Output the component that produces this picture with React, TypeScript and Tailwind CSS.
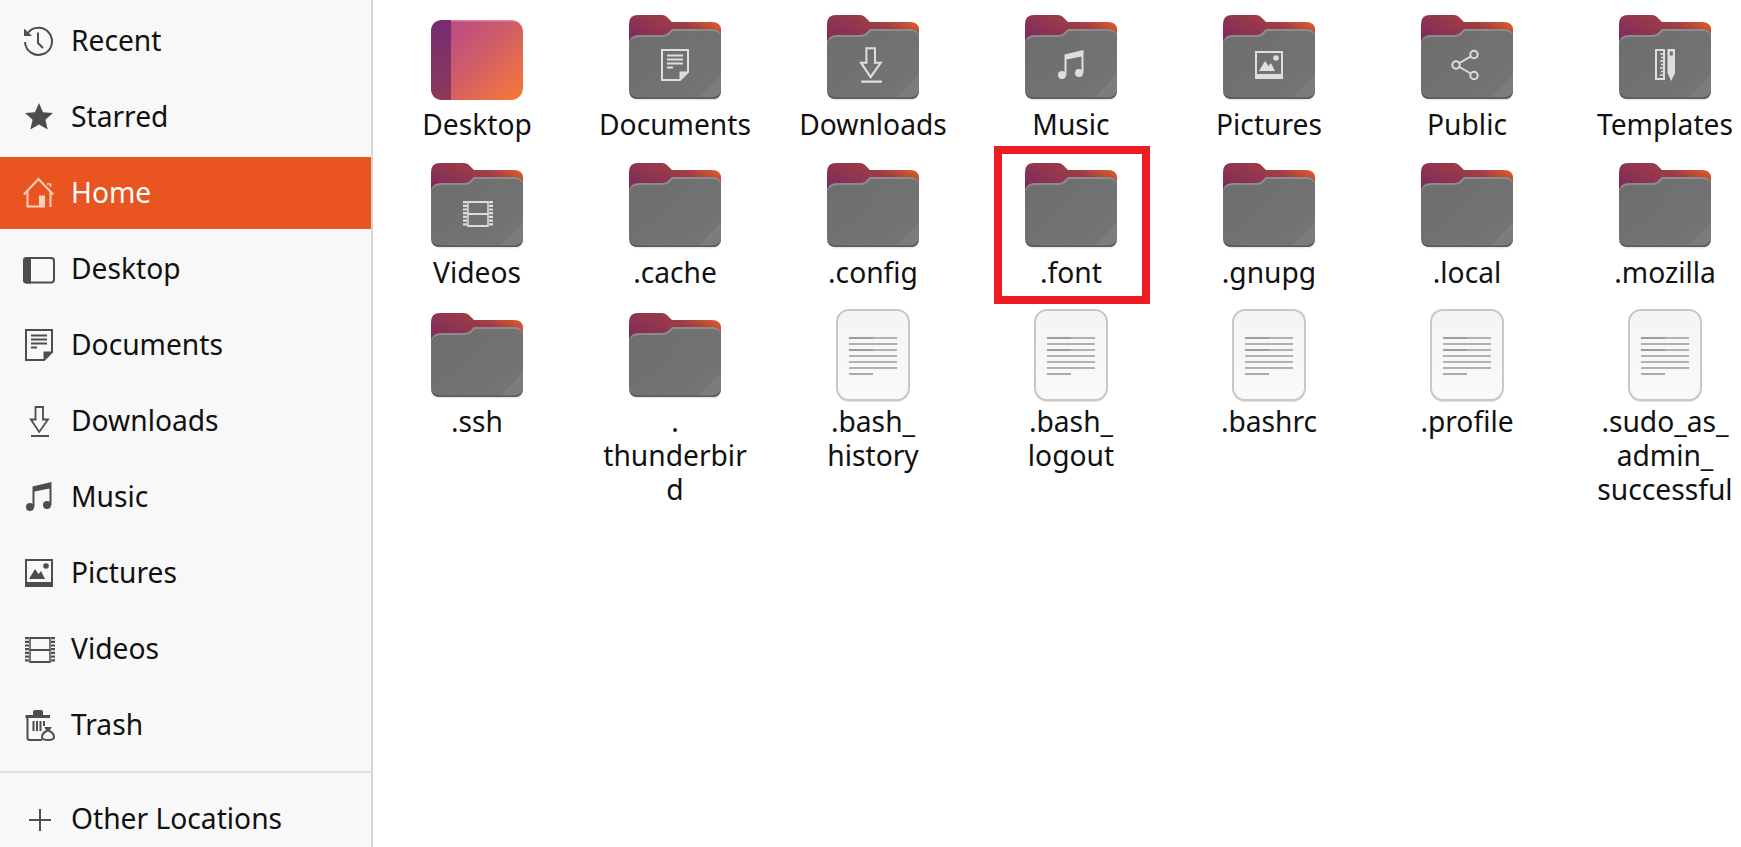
import React from "react";

type GlyphName =
  | "recent" | "starred" | "home" | "desktop" | "documents" | "downloads"
  | "music" | "pictures" | "videos" | "trash" | "plus" | "public" | "templates";

// all glyphs live in a 32x32 box, same drawing for sidebar and folder emblem
function GlyphPaths({ name }: { name: GlyphName }) {
  switch (name) {
    case "recent":
      return (
        <g fill="none" stroke="currentColor" strokeWidth="2">
          <path d="M4.5 8.5A13.5 13.5 0 1 1 2 17" />
          <path d="M1 3.5 L9 11 H1 Z" fill="currentColor" stroke="none" />
          <path d="M15 7.5V18L20 23" />
        </g>
      );
    case "starred":
      return <path fill="currentColor" d="M16 2l4 9.2 10 .9-7.6 6.6 2.3 9.8L16 23.4 7.3 28.5l2.3-9.8L2 12.1l10-.9z" />;
    case "home":
      return (
        <g fill="none" stroke="currentColor" strokeWidth="2">
          <path d="M0.8 17.5L15.5 2 30.2 17.5" />
          <path d="M4.5 14V29.5H16M27.5 14V30" />
          <path d="M24 7h3.5v3" strokeWidth="1.5" />
          <path d="M16 18.5h6V30.5h-6z" fill="currentColor" stroke="none" />
        </g>
      );
    case "desktop":
      return (
        <g>
          <rect x="1" y="5" width="30" height="24.5" rx="3" fill="none" stroke="currentColor" strokeWidth="2" />
          <path d="M3.5 4H8V30.5H3.5A3.5 3.5 0 0 1 0 27V7.5A3.5 3.5 0 0 1 3.5 4Z" fill="currentColor" />
        </g>
      );
    case "documents":
      return (
        <g>
          <path d="M3 1H29V23L21 31H3Z" fill="none" stroke="currentColor" strokeWidth="2" />
          <path d="M29 22.5H20.5V31Z" fill="currentColor" />
          <path d="M8 6.5H24M8 10.5H24M8 14.5H24M8 18.5H14" stroke="currentColor" strokeWidth="2" fill="none" />
        </g>
      );
    case "downloads":
      return (
        <g fill="none" stroke="currentColor" strokeWidth="1.8">
          <path d="M12.5 2H20V14.5H25L16.2 27 7.8 14.5H12.5Z" />
          <path d="M8 31H26" strokeWidth="2" />
        </g>
      );
    case "music":
      return (
        <g fill="currentColor">
          <circle cx="7" cy="26" r="4" />
          <circle cx="24" cy="24" r="4" />
          <path d="M9.5 5.5L28.5 1V24H26.5V7.5L11.5 10.5V26H9.5Z" />
        </g>
      );
    case "pictures":
      return (
        <g>
          <path fillRule="evenodd" fill="currentColor" d="M2 2H30V30H2ZM4 4V25H28V4Z" />
          <path fill="currentColor" d="M6 22L12 12 15.5 17 18 14 22 22Z" />
          <circle cx="23" cy="9" r="2.8" fill="currentColor" />
        </g>
      );
    case "videos":
      return (
        <g fill="none" stroke="currentColor">
          <path d="M4 4V30M30 4V30" strokeWidth="4" strokeDasharray="2.2 1.5" />
          <path d="M7 5H27M7 17H27M7 29H27" strokeWidth="2" />
          <path d="M7 4V30M27 4V30" strokeWidth="1.5" />
        </g>
      );
    case "trash":
      return (
        <g fill="none" stroke="currentColor">
          <path d="M10 6.5V3Q10 1 12 1H18Q20 1 20 3V6.5Z" fill="currentColor" stroke="none" />
          <path d="M2.5 7.5H27" strokeWidth="3" />
          <path d="M4.5 9V29Q4.5 31 6.5 31H19" strokeWidth="2" />
          <path d="M10.5 12V22M14 12V22M17.5 12V22M21 12V17" strokeWidth="2" />
          <path d="M23 19L27 19 25.5 21.5Q31 24 31 28 31 31 25 31 19 31 19 28 19 24 24.5 21.5Z" strokeWidth="2" />
        </g>
      );
    case "plus":
      return <path d="M17 6V28M6 17H28" fill="none" stroke="currentColor" strokeWidth="2" />;
    case "public":
      return (
        <g fill="none" stroke="currentColor" strokeWidth="2">
          <circle cx="5" cy="16" r="3.7" />
          <circle cx="23" cy="5.5" r="3.7" />
          <circle cx="23" cy="26.5" r="3.7" />
          <path d="M8.3 14L19.8 7.5M8.3 18L19.8 24.5" />
        </g>
      );
    case "templates":
      return (
        <g>
          <path fillRule="evenodd" fill="currentColor" d="M6 0H16V31H6ZM8 2V29H14V2Z" />
          <path stroke="currentColor" strokeWidth="1.3" d="M11 5H14M12 8.5H14M11 12H14M12 15.5H14M11 19H14M12 22.5H14M11 26H14" />
          <path fillRule="evenodd" fill="currentColor" d="M18.5 0H26V24L22.2 32 18.5 24ZM20.8 2.5V6.5H23.8V2.5Z" />
        </g>
      );
  }
}

function Glyph({ name, className }: { name: GlyphName; className?: string }) {
  return (
    <svg viewBox="0 0 32 32" width="32" height="32" className={className} overflow="visible">
      <GlyphPaths name={name} />
    </svg>
  );
}

function FolderIcon({ emblem }: { emblem?: GlyphName }) {
  return (
    <svg viewBox="0 0 92 86" width="92" height="86" className="block shrink-0">
      <defs>
        <linearGradient id="folderBack" x1="0" y1="0.9" x2="1" y2="0.1">
          <stop offset="0" stopColor="#752560" />
          <stop offset="0.35" stopColor="#8a3155" />
          <stop offset="0.7" stopColor="#a03d44" />
          <stop offset="1" stopColor="#ee6424" />
        </linearGradient>
        <linearGradient id="folderFace" x1="0" y1="0" x2="1" y2="1">
          <stop offset="0" stopColor="#6d6d6d" />
          <stop offset="1" stopColor="#757575" />
        </linearGradient>
      </defs>
      <path d="M0 22Q0 85.5 8 85.5H84Q92 85.5 92 77V22Z" fill="#000" opacity="0.08" />
      <path d="M9 0H33Q36 0 38 2L43 7H83Q92 7 92 15V40H0V9Q0 0 9 0Z" fill="url(#folderBack)" />
      <path d="M0 30Q0 20 10 20H34Q37 20 39 18L43 14H83Q92 14 92 23V75Q92 84 83 84H9Q0 84 0 75Z" fill="url(#folderFace)" />
      <path d="M14 84L62 14H72L24 84Z" fill="#fff" opacity="0.012" />
      <path d="M92 59V75Q92 84 83 84H68Z" fill="#7c7c7c" />
      <path d="M0 30Q0 20 10 20H34Q37 20 39 18L43 14H83Q92 14 92 23V24Q92 16 83 16H44L40 20Q37 22 34 22H10Q0 22 0 32Z" fill="#8c8c8c" />
      <path d="M0 74V75Q0 84 9 84H83Q92 84 92 75V74Q92 82 83 82.5H9Q0 82 0 74Z" fill="#595959" />
      {emblem && (
        <g transform={emblem === "downloads" ? "translate(25 31) scale(1.15)" : "translate(30 34)"} color="#dedede">
          <GlyphPaths name={emblem} />
        </g>
      )}
    </svg>
  );
}

function DesktopFolderIcon() {
  return (
    <svg viewBox="0 0 92 86" width="92" height="86" className="block shrink-0">
      <defs>
        <linearGradient id="desktopFace" x1="0" y1="0" x2="1" y2="0.9">
          <stop offset="0" stopColor="#b3448f" />
          <stop offset="0.5" stopColor="#cf5c6a" />
          <stop offset="1" stopColor="#f4773a" />
        </linearGradient>
        <linearGradient id="desktopSide" x1="0" y1="0" x2="0" y2="1">
          <stop offset="0" stopColor="#762c72" />
          <stop offset="1" stopColor="#8c3a58" />
        </linearGradient>
      </defs>
      <rect x="0" y="5" width="92" height="80" rx="12" fill="url(#desktopFace)" />
      <path d="M12 5H20V85H12Q0 85 0 73V17Q0 5 12 5Z" fill="url(#desktopSide)" />
      <path d="M20 5H80Q92 5 92 17Q92 6 80 6.5H20Z" fill="#e79aa8" opacity="0.7" />
    </svg>
  );
}

function FileIcon() {
  return (
    <svg viewBox="0 0 74 94" width="74" height="94" className="block shrink-0 -mt-[4px]">
      <defs>
        <linearGradient id="filePage" x1="0" y1="0" x2="0" y2="1">
          <stop offset="0" stopColor="#f4f4f4" />
          <stop offset="1" stopColor="#fafafa" />
        </linearGradient>
      </defs>
      <rect x="1" y="2" width="72" height="91" rx="12" fill="#e2e2e2" />
      <rect x="1" y="1" width="72" height="90" rx="12" fill="url(#filePage)" stroke="#c8c8c8" strokeWidth="2" />
      <path d="M13 29H61M13 35H61M13 41H61M13 47H61M13 53H61M13 59H61" stroke="#b2b2b2" strokeWidth="2" />
      <path d="M13 29H37M13 41H37" stroke="#9c9c9c" strokeWidth="2" />
      <path d="M13 65H37" stroke="#aaaaaa" strokeWidth="2" />
    </svg>
  );
}

const sidebarItems: { name: GlyphName; label: string; active?: boolean }[] = [
  { name: "recent", label: "Recent" },
  { name: "starred", label: "Starred" },
  { name: "home", label: "Home", active: true },
  { name: "desktop", label: "Desktop" },
  { name: "documents", label: "Documents" },
  { name: "downloads", label: "Downloads" },
  { name: "music", label: "Music" },
  { name: "pictures", label: "Pictures" },
  { name: "videos", label: "Videos" },
  { name: "trash", label: "Trash" },
];

type Entry = { label: string; kind: "folder" | "file" | "desktop"; emblem?: GlyphName };

const entries: Entry[] = [
  { label: "Desktop", kind: "desktop" },
  { label: "Documents", kind: "folder", emblem: "documents" },
  { label: "Downloads", kind: "folder", emblem: "downloads" },
  { label: "Music", kind: "folder", emblem: "music" },
  { label: "Pictures", kind: "folder", emblem: "pictures" },
  { label: "Public", kind: "folder", emblem: "public" },
  { label: "Templates", kind: "folder", emblem: "templates" },
  { label: "Videos", kind: "folder", emblem: "videos" },
  { label: ".cache", kind: "folder" },
  { label: ".config", kind: "folder" },
  { label: ".font", kind: "folder" },
  { label: ".gnupg", kind: "folder" },
  { label: ".local", kind: "folder" },
  { label: ".mozilla", kind: "folder" },
  { label: ".ssh", kind: "folder" },
  { label: ".\nthunderbir\nd", kind: "folder" },
  { label: ".bash_\nhistory", kind: "file" },
  { label: ".bash_\nlogout", kind: "file" },
  { label: ".bashrc", kind: "file" },
  { label: ".profile", kind: "file" },
  { label: ".sudo_as_\nadmin_\nsuccessful", kind: "file" },
];

function SidebarRow({ name, label, active }: { name: GlyphName; label: string; active?: boolean }) {
  return (
    <div className={`flex h-[72px] shrink-0 items-center pl-[23px] ${active ? "bg-[#e95420] text-white" : "text-[#111111]"}`}>
      <Glyph name={name} className={`mr-4 shrink-0 ${active ? "text-[#fbd0bc]" : "text-[#4d4d4d]"}`} />
      <span className="pb-[2px]">{label}</span>
    </div>
  );
}

export default function App() {
  return (
    <div className="flex h-screen overflow-hidden bg-white font-['Noto_Sans',sans-serif] text-[28.2px] leading-[34px] text-[#111111]">
      <aside className="flex w-[373px] shrink-0 flex-col gap-1 border-r-2 border-[#d6d6d6] bg-[#f8f8f8] pt-[5px]">
        {sidebarItems.map((item) => (
          <SidebarRow key={item.label} {...item} />
        ))}
        <div className="mt-[6px] h-[2px] shrink-0 bg-[#e0e0e0]" />
        <div className="mt-[6px]">
          <SidebarRow name="plus" label="Other Locations" />
        </div>
      </aside>

      <main className="relative flex-1 overflow-hidden pl-[5px] pt-[15px]">
        <div className="grid grid-cols-[repeat(7,198px)] gap-y-[22px]">
          {entries.map((entry, i) => (
            <div key={entry.label} className="flex flex-col items-center">
              {/* last row holds the taller file icons, so it sits 2px lower */}
              <div className={`mb-[7px] flex items-start justify-center ${i >= 14 ? "h-[86px] pt-[2px]" : "h-[85px]"}`}>
                {entry.kind === "desktop" && <DesktopFolderIcon />}
                {entry.kind === "folder" && <FolderIcon emblem={entry.emblem} />}
                {entry.kind === "file" && <FileIcon />}
              </div>
              <div className="whitespace-pre-line text-center">{entry.label}</div>
            </div>
          ))}
        </div>

        <div className="absolute left-[621px] top-[146px] h-[158px] w-[156px] border-8 border-[#ed1c24]" />
      </main>
    </div>
  );
}
